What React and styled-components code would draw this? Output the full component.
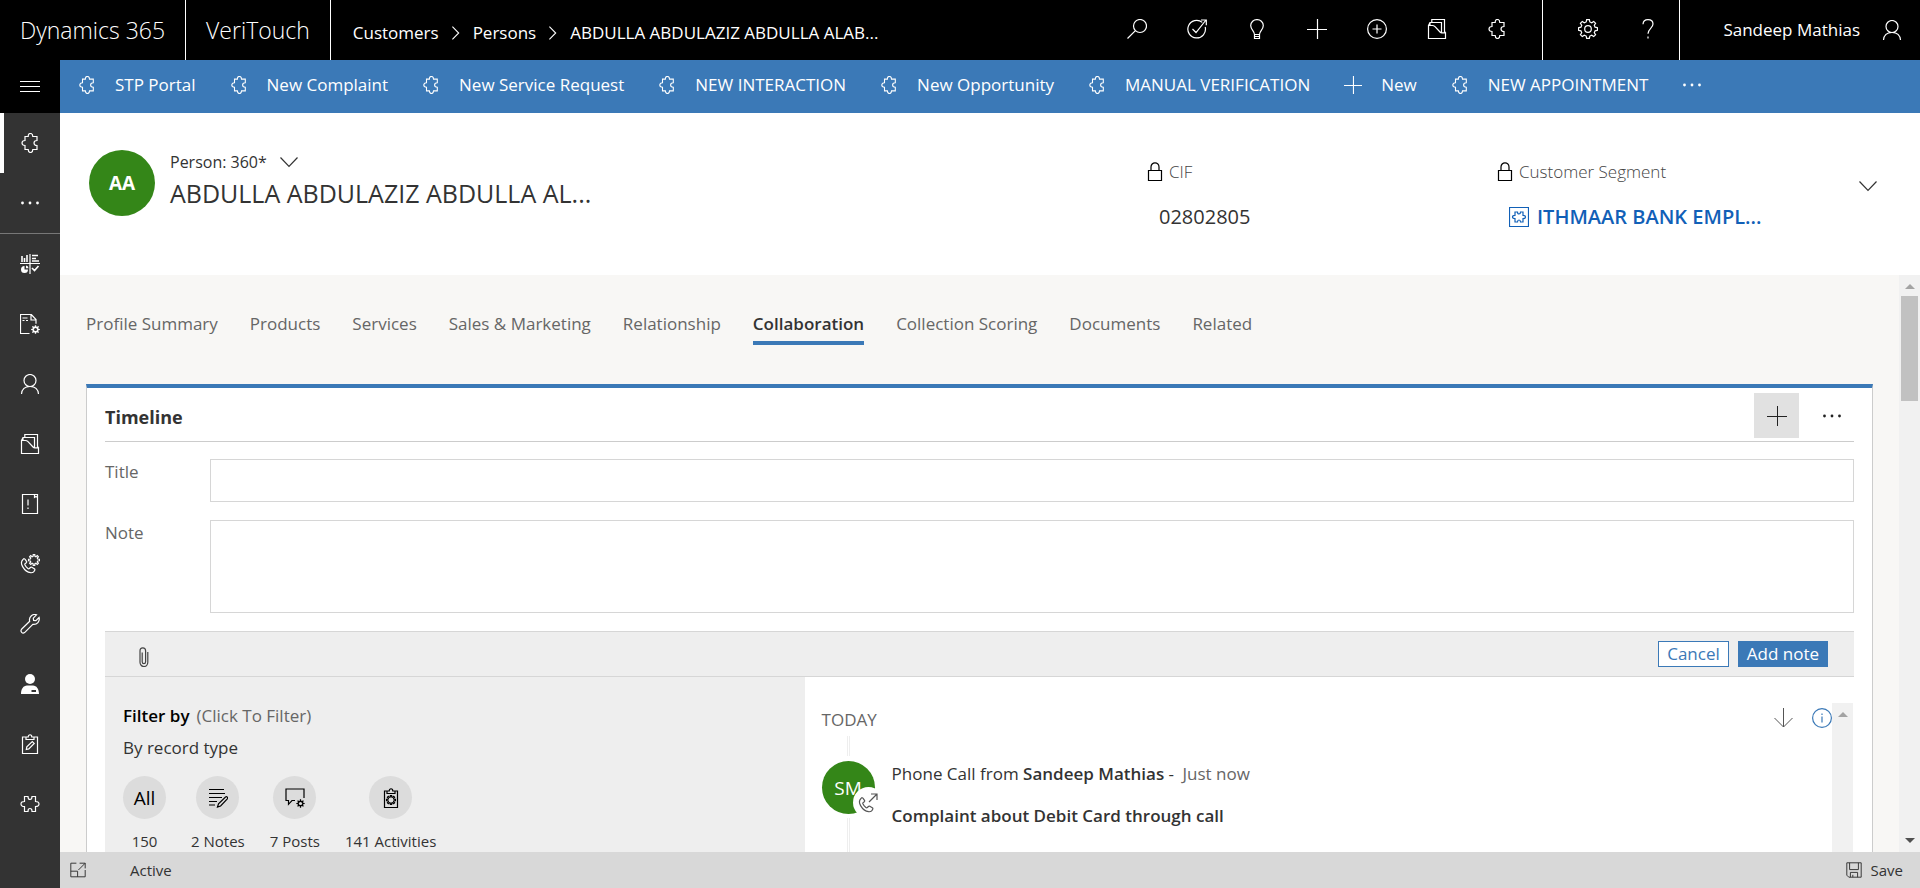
import React from "react";
import styled, { createGlobalStyle, css } from "styled-components";

const BLUE = "#3b79b7";
const GREEN = "#348618";

const GlobalStyle = createGlobalStyle`
  *, *::before, *::after { box-sizing: border-box; }
  body {
    margin: 0;
    font-family: "Open Sans", "Noto Sans", sans-serif;
    font-size: 17px;
    line-height: 24px;
    color: #333;
    background: #f8f7f5;
  }
  button, input, textarea { font: inherit; color: inherit; }
  button { border: 0; padding: 0; background: none; cursor: pointer; }
  h1, h2, h3, p, ul, dl, dd { margin: 0; padding: 0; font-weight: inherit; font-size: inherit; }
  ul { list-style: none; }
  a { color: inherit; text-decoration: none; }
  svg { display: block; flex: none; }
`;

/* ---------- icons ---------- */

const gearPath = (cx, cy, outer, inner, teeth) => {
  const points = [];
  const step = (Math.PI * 2) / teeth;
  for (let i = 0; i < teeth; i += 1) {
    const a = i * step - Math.PI / 2;
    [[-0.32, inner], [-0.18, outer], [0.18, outer], [0.32, inner]].forEach(([f, r]) => {
      points.push(`${(cx + r * Math.cos(a + f * step)).toFixed(2)} ${(cy + r * Math.sin(a + f * step)).toFixed(2)}`);
    });
  }
  return `M${points.join("L")}Z`;
};

const HANDSET = "M3.2 5.2C1.2 7 .8 9.500 2.600 12.600c1.900 3.300 5 5.700 8 6.100 2 .2 3.600-.9 4.200-2.600.2-.6 0-1-.5-1.300l-2.500-1.500c-.5-.3-1-.2-1.400.2l-1 1c-.5.4-1 .4-1.500 0-1.400-1-2.400-2.300-3-3.700-.2-.5-.1-1 .4-1.300l1-.8c.4-.4.5-.9.2-1.400L5.100 5.300c-.5-.7-1.200-.8-1.900-.1z";

const ICONS = {
  puzzle: <path d="M5 3.500h3.200c0-2 .6-3 2.300-3s2.300 1 2.300 3H17v4c-2 0-3 .8-3 2.500s1 2.500 3 2.500v4h-4.200c0 2-.6 3-2.300 3s-2.300-1-2.300-3H5v-4c-2 0-3-.8-3-2.500s1-2.500 3-2.500z" />,
  puzzleWide: <path d="M4.500 2.500H8c0 2.200.8 3 2 3s2-.8 2-3h3.500v5c2.200 0 3.500.8 3.500 2.500s-1.300 2.500-3.500 2.500v5H12c0-2.200-.8-3-2-3s-2 .8-2 3H4.500v-5C2.300 12.500 1 11.700 1 10s1.300-2.500 3.500-2.500z" />,
  puzzleBox: (
    <>
      <path d="M.5.500h19v19H.5z" />
      <path d="M6 5h2.500c0 1.400.5 2 1.500 2s1.500-.6 1.500-2H14v3.300c1.600 0 2.500.5 2.500 1.700s-.9 1.700-2.500 1.700V15h-2.500c0-1.400-.5-2-1.500-2s-1.500.6-1.500 2H6v-3.300c-1.600 0-2.500-.5-2.500-1.700S4.400 8.300 6 8.300z" />
    </>
  ),
  search: <path d="M19.500 7a6.500 6.500 0 1 1-13 0 6.500 6.500 0 0 1 13 0zM8.400 11.600L.5 19.500" />,
  task: <path d="M15.300 3.400A8.800 8.800 0 1 0 18.200 8M5.500 10l3.500 3.500L19 1M14 1h5.300v5.300" />,
  bulb: <path d="M7.500 15.500c0-3.500-3.800-5-3.800-9A6.100 6.100 0 0 1 10 .6a6.100 6.100 0 0 1 6.300 5.900c0 4-3.800 5.500-3.800 9zM7.500 15.500v4h5v-4M7.500 17.500h5" />,
  plus: <path d="M10.500 0v20M0 10.500h20" />,
  plusCircle: <path d="M19.400 10A9.400 9.400 0 1 1 .6 10a9.400 9.400 0 0 1 18.800 0zM10 5.500v9M5.500 10h9" />,
  folder: <path d="M1.500 6.500h3.800c1.200 0 1.900.4 2.700 1.200l5 5.300c.6.700 1 .9 1.800.9h3.700v5.600h-17zM3 6.500v-3h11.500v10.200M4.800 3.500v-3h12.700v13.300M1.500 6.500l1.500-3M18.500 13.900l-1-1.500" />,
  gear: (
    <>
      <path d={gearPath(10, 10, 9.5, 7.3, 8)} />
      <circle cx="10" cy="10" r="3.300" />
    </>
  ),
  help: <path d="M5 5.200C5.200 2.300 7 .7 10 .7s5 1.700 5 4.400c0 4-5 4.800-5 9.700M10 17.500v2" />,
  user: <path d="M16 6.500a6 6 0 1 1-12 0 6 6 0 0 1 12 0zM1.500 20c.4-4.600 3.600-7.500 8.500-7.500s8.100 2.900 8.500 7.500" />,
  menu: <path d="M0 4.500h20M0 9.500h20M0 14.500h20" />,
  dots: (
    <g fill="currentColor" stroke="none">
      <circle cx="2.500" cy="10" r="1.400" />
      <circle cx="10" cy="10" r="1.400" />
      <circle cx="17.500" cy="10" r="1.400" />
    </g>
  ),
  chevronRight: <path d="M6 3l7 7-7 7" />,
  chevronDown: <path d="M1.500 5.500L10 14.500l8.500-9" />,
  lock: <path d="M3.500 8.500h13v10h-13zM6 8.500V5a4 4.200 0 0 1 8 0v3.500" />,
  dashboard: (
    <>
      <path d="M10 0v20M0 9.500h20" />
      <path d="M2 2v6M4.500 4v4M7 1v7M12 1.500h6M12 4.500h4M12 7h7M12 14l2.500 2.500L18.500 12" strokeWidth="1.600" />
      <path d="M4.500 12v3.500H8A3.500 3.500 0 1 1 4.500 12z" fill="currentColor" stroke="none" />
      <path d="M6 11.500a3 3 0 0 1 2.500 2.700H6z" fill="currentColor" stroke="none" />
    </>
  ),
  pageGear: (
    <>
      <path d="M9.500 19.500h-9V.5h10.800l4.700 5v4.300M11 .5V6h5M2.500 4h5M2.500 6.500h2M6 6.500h2" />
      <path d={gearPath(15.5, 15.5, 4.4, 3.1, 8)} fill="currentColor" stroke="none" />
      <circle cx="15.500" cy="15.500" r="1.600" fill="#333" stroke="none" />
    </>
  ),
  alertBook: <path d="M2.500.5h15v19h-15zM14.500.5v3l1.500-1 1.500 1M8 5.500v6M8 13.500v1.500" />,
  phoneGear: (
    <>
      <path d={HANDSET} />
      <path d={gearPath(14, 6, 5.5, 3.8, 8)} />
    </>
  ),
  phoneOut: (
    <>
      <path d={HANDSET} />
      <path d="M11 9l8-8M13 1h6v6" />
    </>
  ),
  wrench: <path d="M1.500 15.300l8.200-8A5.300 5.300 0 0 1 16.500.8l-3.200 3.400.3 2.200 2.300.3 3.200-3.200c1 3.700-2 7.500-6.300 6.800l-8.200 8.300c-2.200 1.600-4.600-1-3.100-3.300z" />,
  userSolid: (
    <g fill="currentColor" stroke="none">
      <circle cx="10" cy="5" r="5" />
      <path d="M1 20c0-5 2.500-8.500 6-8.500h6c3.500 0 6 3.500 6 8.500zm10.500-4v2h4.500v-2z" fillRule="evenodd" />
    </g>
  ),
  clipPen: <path d="M6 3H2.500v16.500h15V3H14M6 5.500V3h2.200c0-3 3.600-3 3.600 0H14v2.500zM6.300 15.500l.5-2.600 5.500-5.400 1.900 1.900-5.400 5.500z" />,
  clipGear: (
    <>
      <path d="M6 3H3.500v16.500h13V3H14M6 5.500V3h2.200c0-3 3.600-3 3.600 0H14v2.500z" />
      <path d={gearPath(10, 12, 4.5, 3, 8)} />
    </>
  ),
  clip: <path d="M13.800 5v10.200a3.900 4.300 0 0 1-7.800 0V3.800a2.800 3 0 0 1 5.600 0v11a1.700 1.900 0 0 1-3.400 0V5.500" />,
  notes: <path d="M1 1.500h15M1 5.500h16M1 9.500h13M1 13.500h8M1 17h6M9.500 19l1-3.200 7-6.800c1.400-.9 2.700.6 1.800 1.800l-6.700 7.200z" />,
  post: (
    <>
      <path d="M10 12.500H7l-3.500 3.800v-3.800H1V1h18v9" />
      <path d={gearPath(15.5, 15.5, 4.2, 2.9, 8)} fill="currentColor" stroke="none" />
      <circle cx="15.500" cy="15.500" r="1.600" fill="#dcdcdc" stroke="none" />
    </>
  ),
  arrowDown: <path d="M10.500 0v19M1.500 10l9 9 9-9" />,
  info: (
    <>
      <circle cx="10" cy="10" r="9.400" />
      <path d="M10 8.500v6M10 5.500v1.500" />
    </>
  ),
  popout: <path d="M8 1.500H1v17h18V10M12 1.500h7V8M19 1.500l-8.500 8.500M1 11.500h8.500v7" />,
  save: <path d="M1 1h18v18H3.500L1 16.500zM4.500 1v8.500h11V1M5.500 19v-6h9v6M8.500 19v-3" />,
};

const Icon = ({ name, size = 20, weight = 1.2 }) => (
  <svg width={size} height={size} viewBox="0 0 20 20" fill="none" stroke="currentColor" strokeWidth={weight} aria-hidden="true">
    {ICONS[name]}
  </svg>
);

/* ---------- shell ---------- */

const Shell = styled.div`
  display: flex;
  flex-direction: column;
  height: 100vh;
  overflow: hidden;
`;

const TopBar = styled.header`
  display: flex;
  flex: none;
  height: 60px;
  background: #000;
  color: #fff;
`;

const Brand = styled.a`
  display: flex;
  align-items: center;
  padding: 0 20px;
  border-right: 1px solid #fff;
  font-size: 23px;
  font-weight: 300;
  white-space: nowrap;
`;

const Breadcrumb = styled.nav`
  display: flex;
  align-items: center;
  gap: 8px;
  padding: 6px 0 0 22px;
  white-space: nowrap;
`;

const TopTools = styled.div`
  display: flex;
  padding: 0 15px 0 0;
  margin-left: auto;
  border-right: 1px solid #fff;
`;

const SettingsTools = styled(TopTools)`
  margin-left: 0;
  padding: 0 1px 0 15px;
`;

const TopButton = styled.button`
  display: grid;
  place-items: center;
  width: 60px;
  height: 58px;
`;

const UserButton = styled.button`
  display: flex;
  align-items: center;
  gap: 22px;
  height: 60px;
  padding: 0 18px 0 43px;
  white-space: nowrap;
`;

const Body = styled.div`
  display: flex;
  flex: 1;
  min-height: 0;
`;

const SideNav = styled.nav`
  display: flex;
  flex: none;
  flex-direction: column;
  width: 60px;
  background: #333;
  color: #fff;
`;

const NavToggle = styled.button`
  display: grid;
  flex: none;
  place-items: center;
  height: 53px;
  padding-top: 1px;
  background: #000;
`;

const NavButton = styled.button`
  display: grid;
  flex: none;
  place-items: center;
  width: 60px;
  height: 60px;
  ${(p) => p.$active && css`box-shadow: inset 4px 0 0 #fff;`}
  ${(p) => p.$divider && css`height: 61px; border-bottom: 1px solid #777;`}
`;

const Main = styled.main`
  display: flex;
  flex: 1;
  flex-direction: column;
  min-width: 0;
`;

const CommandBar = styled.div`
  display: flex;
  flex: none;
  align-items: center;
  gap: 34px;
  height: 53px;
  padding: 0 18px 3px;
  background: ${BLUE};
  color: #fff;
`;

const Command = styled.button`
  display: flex;
  align-items: center;
  gap: 19px;
  white-space: nowrap;
`;

/* ---------- record header ---------- */

const RecordHeader = styled.section`
  display: flex;
  flex: none;
  height: 162px;
  padding: 37px 42px 0 29px;
  background: #fff;
`;

const Avatar = styled.div`
  position: relative;
  display: grid;
  flex: none;
  place-items: center;
  width: ${(p) => p.$size}px;
  height: ${(p) => p.$size}px;
  border-radius: 50%;
  background: ${GREEN};
  color: #fff;
  font-size: 19px;
  font-weight: ${(p) => (p.$bold ? 700 : 400)};
`;

const Identity = styled.div`
  flex: 1;
  min-width: 0;
  padding-left: 15px;
`;

const FormPicker = styled.button`
  display: flex;
  align-items: center;
  gap: 12px;
  font-size: 16px;
`;

const RecordName = styled.h1`
  font-size: 25px;
  line-height: 38px;
  white-space: nowrap;
`;

const HeaderField = styled.dl`
  flex: none;
  width: ${(p) => p.$width}px;
  padding-top: 10px;
`;

const FieldLabel = styled.dt`
  display: flex;
  align-items: center;
  gap: 4px;
  font-weight: 300;
  color: #444;
  svg { color: #000; }
`;

const FieldValue = styled.dd`
  display: flex;
  padding: 17px 0 0 14px;
  font-size: 20px;
  line-height: 32px;
  white-space: nowrap;
`;

const SegmentLink = styled.a`
  display: flex;
  align-items: center;
  gap: 8px;
  color: #1160b7;
  font-weight: 600;
`;

const Expander = styled.button`
  align-self: flex-start;
  margin-top: 26px;
`;

/* ---------- scrolled form ---------- */

const ScrollArea = styled.div`
  display: flex;
  flex: 1;
  min-height: 0;
  overflow: hidden;
`;

const FormColumn = styled.div`
  flex: 1;
  min-width: 0;
  padding: 36px 26px 0;
`;

const Track = styled.div`
  display: flex;
  flex: none;
  flex-direction: column;
  align-items: center;
  width: 21px;
  padding: 9px 2px;
  background: #f1f1f1;
`;

const Arrow = styled.span`
  border: 5px solid transparent;
  ${(p) => (p.$down
    ? css`margin-top: auto; border-top-color: #505050; border-bottom: 0;`
    : css`border-bottom-color: #a3a3a3; border-top: 0;`)}
`;

const Thumb = styled.span`
  width: 17px;
  height: 105px;
  margin-top: 7px;
  background: #c1c1c1;
`;

const TabList = styled.div`
  display: flex;
  gap: 32px;
  white-space: nowrap;
`;

const Tab = styled.button`
  height: 34px;
  padding-bottom: 4px;
  color: ${(p) => (p.$active ? "#333" : "#666")};
  font-weight: ${(p) => (p.$active ? 600 : 400)};
  border-bottom: 4px solid ${(p) => (p.$active ? BLUE : "transparent")};
`;

const Card = styled.section`
  margin-top: 39px;
  padding: 5px 18px 0;
  border: 1px solid #ccc;
  border-top: 4px solid ${BLUE};
  border-bottom: 0;
  background: #fff;
`;

const CardHead = styled.div`
  display: flex;
  align-items: center;
  gap: 10px;
  height: 49px;
  padding-bottom: 3px;
  border-bottom: 1px solid #ccc;
`;

const CardTitle = styled.h2`
  margin-right: auto;
  padding-top: 3px;
  font-size: 18px;
  font-weight: 700;
`;

const CardButton = styled.button`
  display: grid;
  place-items: center;
  width: 45px;
  height: 45px;
  color: #222;
  background: ${(p) => (p.$filled ? "#e1e1e1" : "transparent")};
`;

const FieldRow = styled.div`
  display: flex;
  align-items: flex-start;
  margin-top: ${(p) => p.$top}px;
  color: #666;
  label { flex: none; width: 105px; padding-top: 1px; }
`;

const controlStyle = css`
  display: block;
  flex: 1;
  min-width: 0;
  padding: 8px;
  border: 1px solid #d6d6d6;
  border-radius: 0;
  background: #fff;
  resize: none;
`;

const TextBox = styled.input`
  ${controlStyle}
  height: 43px;
`;

const NoteBox = styled.textarea`
  ${controlStyle}
  height: 93px;
`;

const NoteBar = styled.div`
  display: flex;
  align-items: center;
  gap: 9px;
  height: 46px;
  margin-top: 18px;
  padding: 0 26px 0 29px;
  border: solid #d6d6d6;
  border-width: 1px 0;
  background: #eee;
`;

const AttachButton = styled.button`
  margin-right: auto;
  padding-top: 6px;
  color: #444;
`;

const ActionButton = styled.button`
  height: 26px;
  padding: 0 8px;
  border: 1px solid ${BLUE};
  line-height: 24px;
  color: ${(p) => (p.$primary ? "#fff" : BLUE)};
  background: ${(p) => (p.$primary ? BLUE : "#fff")};
`;

const Wall = styled.div`
  display: flex;
  height: 400px;
`;

const Filters = styled.section`
  flex: 0 0 40%;
  padding: 27px 18px 0;
  background: #eee;
`;

const FilterTitle = styled.h3`
  display: flex;
  gap: 7px;
  color: #666;
  strong { font-weight: 600; color: #000; }
`;

const FilterText = styled.p`
  padding-top: 8px;
`;

const FilterList = styled.ul`
  display: flex;
  gap: 25px;
  padding-top: 16px;
`;

const FilterButton = styled.button`
  display: flex;
  flex-direction: column;
  align-items: center;
  gap: 10px;
  font-size: 15px;
  white-space: nowrap;
`;

const FilterDisc = styled.span`
  display: grid;
  place-items: center;
  width: 43px;
  height: 43px;
  border-radius: 50%;
  background: #dcdcdc;
  color: #000;
  font-size: 19px;
`;

const Feed = styled.section`
  display: flex;
  flex: 1;
  min-width: 0;
  padding: 26px 1px 0 17px;
`;

const FeedBody = styled.div`
  flex: 1;
  min-width: 0;
`;

const FeedHead = styled.div`
  display: flex;
  align-items: flex-start;
  height: 33px;
  h3 { margin-right: auto; padding-top: 5px; color: #666; }
`;

const FeedIcon = styled.button`
  height: 30px;
  margin-left: 19px;
  color: ${(p) => p.$color};
`;

const Thread = styled.article`
  display: flex;
  gap: 17px;
`;

const Rail = styled.div`
  display: flex;
  flex-direction: column;
  align-items: center;
`;

const RailLine = styled.span`
  width: 3px;
  height: ${(p) => p.$height}px;
  margin: ${(p) => p.$gap};
  border: solid #eee;
  border-width: 0 1px;
`;

const Badge = styled.span`
  position: absolute;
  right: -9px;
  bottom: -4px;
  display: grid;
  place-items: center;
  width: 31px;
  height: 31px;
  border-radius: 50%;
  background: #fff;
  color: #555;
`;

const Activity = styled.div`
  padding-top: 26px;
  p { white-space: nowrap; }
  strong { font-weight: 600; }
  time { margin-left: 4px; color: #666; }
`;

const Subject = styled.p`
  padding-top: 18px;
  font-weight: 600;
`;

const Footer = styled.footer`
  display: flex;
  flex: none;
  align-items: center;
  height: 36px;
  padding: 0 17px 0 10px;
  background: #d8d8d8;
  font-size: 15px;
`;

const FooterStatus = styled.span`
  margin-right: auto;
  padding-left: 44px;
`;

const FooterButton = styled.button`
  display: flex;
  align-items: center;
  gap: 9px;
`;

/* ---------- data ---------- */

const COMMANDS = ["STP Portal", "New Complaint", "New Service Request", "NEW INTERACTION", "New Opportunity", "MANUAL VERIFICATION", "New", "NEW APPOINTMENT"];
const TABS = ["Profile Summary", "Products", "Services", "Sales & Marketing", "Relationship", "Collaboration", "Collection Scoring", "Documents", "Related"];
const TOOLS = [["search", "Search"], ["task", "Task flow"], ["bulb", "Assistant"], ["plus", "Add"], ["plusCircle", "Quick create"], ["folder", "Cases"], ["puzzle", "Extensions"]];
const NAV = [["puzzle", "Persons"], ["dots", "More"], ["dashboard", "Dashboards"], ["pageGear", "Activities"], ["user", "Contacts"], ["folder", "Cases"], ["alertBook", "Knowledge"], ["phoneGear", "Calls"], ["wrench", "Service"], ["userSolid", "Leads"], ["clipPen", "Tasks"], ["puzzleWide", "Components"]];
const FILTERS = [["150", null], ["2 Notes", "notes"], ["7 Posts", "post"], ["141 Activities", "clipGear"]];

export default function App() {
  return (
    <Shell>
      <GlobalStyle />
      <TopBar>
        <Brand href="#">Dynamics 365</Brand>
        <Brand href="#">VeriTouch</Brand>
        <Breadcrumb aria-label="Breadcrumb">
          <a href="#">Customers</a>
          <Icon name="chevronRight" size={18} />
          <a href="#">Persons</a>
          <Icon name="chevronRight" size={18} />
          <span>ABDULLA ABDULAZIZ ABDULLA ALAB...</span>
        </Breadcrumb>
        <TopTools>
          {TOOLS.map(([icon, label]) => (
            <TopButton key={label} aria-label={label}><Icon name={icon} /></TopButton>
          ))}
        </TopTools>
        <SettingsTools>
          <TopButton aria-label="Settings"><Icon name="gear" /></TopButton>
          <TopButton aria-label="Help"><Icon name="help" /></TopButton>
        </SettingsTools>
        <UserButton>Sandeep Mathias <Icon name="user" /></UserButton>
      </TopBar>
      <Body>
        <SideNav aria-label="Site map">
          <NavToggle aria-label="Toggle navigation"><Icon name="menu" weight={1} /></NavToggle>
          {NAV.map(([icon, label], i) => (
            <NavButton key={label} aria-label={label} $active={i === 0} $divider={i === 1}>
              <Icon name={icon} />
            </NavButton>
          ))}
        </SideNav>
        <Main>
          <CommandBar>
            {COMMANDS.map((label) => (
              <Command key={label}>
                <Icon name={label === "New" ? "plus" : "puzzle"} size={18} />
                {label}
              </Command>
            ))}
            <Command aria-label="More commands"><Icon name="dots" /></Command>
          </CommandBar>
          <RecordHeader>
            <Avatar $size={66} $bold>AA</Avatar>
            <Identity>
              <FormPicker>Person: 360* <Icon name="chevronDown" /></FormPicker>
              <RecordName>ABDULLA ABDULAZIZ ABDULLA AL...</RecordName>
            </Identity>
            <HeaderField $width={350}>
              <FieldLabel><Icon name="lock" />CIF</FieldLabel>
              <FieldValue>02802805</FieldValue>
            </HeaderField>
            <HeaderField $width={363}>
              <FieldLabel><Icon name="lock" />Customer Segment</FieldLabel>
              <FieldValue>
                <SegmentLink href="#"><Icon name="puzzleBox" />ITHMAAR BANK EMPL...</SegmentLink>
              </FieldValue>
            </HeaderField>
            <Expander aria-label="Expand header"><Icon name="chevronDown" /></Expander>
          </RecordHeader>
          <ScrollArea>
            <FormColumn>
              <TabList role="tablist">
                {TABS.map((tab) => (
                  <Tab key={tab} role="tab" aria-selected={tab === "Collaboration"} $active={tab === "Collaboration"}>{tab}</Tab>
                ))}
              </TabList>
              <Card>
                <CardHead>
                  <CardTitle>Timeline</CardTitle>
                  <CardButton $filled aria-label="Create"><Icon name="plus" weight={1} /></CardButton>
                  <CardButton aria-label="More"><Icon name="dots" /></CardButton>
                </CardHead>
                <FieldRow $top={17}>
                  <label htmlFor="note-title">Title</label>
                  <TextBox id="note-title" />
                </FieldRow>
                <FieldRow $top={18}>
                  <label htmlFor="note-text">Note</label>
                  <NoteBox id="note-text" />
                </FieldRow>
                <NoteBar>
                  <AttachButton aria-label="Attach a file"><Icon name="clip" /></AttachButton>
                  <ActionButton>Cancel</ActionButton>
                  <ActionButton $primary>Add note</ActionButton>
                </NoteBar>
                <Wall>
                  <Filters>
                    <FilterTitle><strong>Filter by</strong>(Click To Filter)</FilterTitle>
                    <FilterText>By record type</FilterText>
                    <FilterList>
                      {FILTERS.map(([label, icon]) => (
                        <li key={label}>
                          <FilterButton>
                            <FilterDisc>{icon ? <Icon name={icon} /> : "All"}</FilterDisc>
                            {label}
                          </FilterButton>
                        </li>
                      ))}
                    </FilterList>
                  </Filters>
                  <Feed>
                    <FeedBody>
                      <FeedHead>
                        <h3>TODAY</h3>
                        <FeedIcon $color="#555" aria-label="Sort"><Icon name="arrowDown" weight={1} /></FeedIcon>
                        <FeedIcon $color={BLUE} aria-label="Information"><Icon name="info" /></FeedIcon>
                      </FeedHead>
                      <Thread>
                        <Rail>
                          <RailLine $height={20} $gap="0 0 5px" />
                          <Avatar $size={53}>
                            SM
                            <Badge><Icon name="phoneOut" /></Badge>
                          </Avatar>
                          <RailLine $height={200} $gap="4px 0 0" />
                        </Rail>
                        <Activity>
                          <p>Phone Call from <strong>Sandeep Mathias</strong> - <time>Just now</time></p>
                          <Subject>Complaint about Debit Card through call</Subject>
                        </Activity>
                      </Thread>
                    </FeedBody>
                    <Track aria-hidden="true"><Arrow /></Track>
                  </Feed>
                </Wall>
              </Card>
            </FormColumn>
            <Track aria-hidden="true">
              <Arrow />
              <Thumb />
              <Arrow $down />
            </Track>
          </ScrollArea>
          <Footer>
            <button aria-label="Open in a new window"><Icon name="popout" size={16} /></button>
            <FooterStatus>Active</FooterStatus>
            <FooterButton><Icon name="save" size={16} />Save</FooterButton>
          </Footer>
        </Main>
      </Body>
    </Shell>
  );
}
